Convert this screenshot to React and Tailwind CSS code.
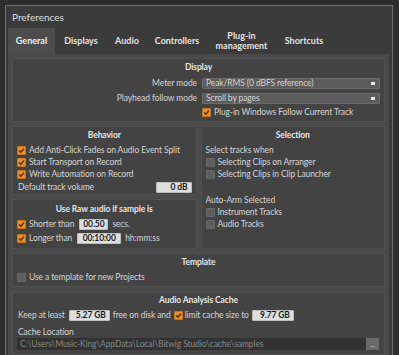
import React from 'react';

// Case à cocher façon Bitwig
const Check = ({ on }) => (
    <span
        className={`w-[9px] h-[9px] shrink-0 rounded-[1px] border flex items-center justify-center ${
            on ? 'bg-[#e8902a] border-[#c87418]' : 'bg-[#5e5e5e] border-[#686868]'
        }`}
    >
        {on && (
            <svg width="7" height="7" viewBox="0 0 7 7">
                <path d="M1.2 3.6 L2.9 5.2 L5.9 1.6" fill="none" stroke="#4a2800" strokeWidth="1.4" />
            </svg>
        )}
    </span>
);

const CheckRow = ({ on, label, className = '' }) => (
    <div className={`h-[12px] flex items-center gap-[3px] ${className}`}>
        <Check on={on} />
        <span>{label}</span>
    </div>
);

const Field = ({ value, className = '' }) => (
    <span
        className={`h-[11px] shrink-0 flex items-center bg-[#dedede] border border-[#bdbdbd] text-[#1c1c1c] font-bold rounded-[1px] px-[3px] ${className}`}
    >
        {value}
    </span>
);

const Select = ({ value }) => (
    <div className="h-[11px] flex-1 flex items-center justify-between bg-[#5c5c5c] border border-[#6b6b6b] rounded-[1px] pl-[3px] pr-[4px]">
        <span>{value}</span>
        <span className="w-[4px] h-[3px] bg-[#e6e6e6]"></span>
    </div>
);

const Section = ({ title, className = '', children }) => (
    <div className={`shrink-0 bg-[#434343] border border-[#505050] ${className}`}>
        <div className="h-[14px] flex items-center justify-center font-bold text-[#e4e4e4]">{title}</div>
        {children}
    </div>
);

const tabs = [
    { label: 'General', w: 'w-[47px]', active: true },
    { label: 'Displays', w: 'w-[52px]' },
    { label: 'Audio', w: 'w-[40px]' },
    { label: 'Controllers', w: 'w-[60px]' },
    { label: 'Plug-in management', w: 'w-[69px]', twoLines: true },
    { label: 'Shortcuts', w: 'w-[56px]' },
];

export default function App() {
    return (
        <div className="w-[399px] h-[355px] overflow-hidden bg-[#2d2d2d] pl-[5px] pt-[5px] font-[family-name:Lato,sans-serif] text-[8.5px] tracking-[-0.1px] leading-none text-[#d4d4d4] whitespace-nowrap">
            <div className="w-[388px] min-h-[350px] bg-[#3b3b3b] border-l border-t border-r border-[#6e6e6e] flex flex-col">
                {/* Titre */}
                <div className="h-[22px] shrink-0 flex items-center pl-[6px] text-[10px] tracking-normal text-[#dcdcdc]">Preferences</div>

                {/* Onglets */}
                <div className="h-[26px] shrink-0 flex ml-[2px] text-[9px] tracking-normal">
                    {tabs.map((t) => (
                        <div
                            key={t.label}
                            className={`${t.w} flex items-center justify-center text-center font-bold leading-[10px] ${
                                t.active ? 'bg-[#4c4c4c] text-[#f0f0f0]' : 'text-[#e2e2e2]'
                            }`}
                        >
                            {t.twoLines ? (
                                <span>
                                    Plug-in
                                    <br />
                                    management
                                </span>
                            ) : (
                                t.label
                            )}
                        </div>
                    ))}
                </div>

                {/* Contenu */}
                <div className="shrink-0 ml-[2px] mr-[3px] bg-[#4a4a4a] p-[4px] flex flex-col gap-[4px]">
                    <Section title="Display" className="pt-[1px] pb-[2px]">
                        <div className="grid grid-cols-[184px_1fr] gap-x-[5px] pr-[4px] mt-[2px]">
                            <div className="h-[14px] flex items-center justify-end">Meter mode</div>
                            <div className="h-[14px] flex items-center">
                                <Select value="Peak/RMS (0 dBFS reference)" />
                            </div>
                            <div className="h-[14px] mt-[1px] flex items-center justify-end">Playhead follow mode</div>
                            <div className="h-[14px] mt-[1px] flex items-center">
                                <Select value="Scroll by pages" />
                            </div>
                            <div></div>
                            <div className="h-[14px] flex items-center gap-[3px]">
                                <Check on />
                                <span>Plug-in Windows Follow Current Track</span>
                            </div>
                        </div>
                    </Section>

                    <div className="shrink-0 grid grid-cols-2 gap-[4px]">
                        <div className="flex flex-col gap-[4px]">
                            <Section title="Behavior" className="pt-[1px] pb-[1px] px-[4px]">
                                <div className="mt-[2px]">
                                    <CheckRow on label="Add Anti-Click Fades on Audio Event Split" />
                                    <CheckRow on label="Start Transport on Record" />
                                    <CheckRow on label="Write Automation on Record" />
                                    <div className="h-[12px] mt-[1px] flex items-center justify-between">
                                        <span className="pl-[1px]">Default track volume</span>
                                        <Field value="0 dB" className="w-[36px] justify-end" />
                                    </div>
                                </div>
                            </Section>
                            <Section title="Use Raw audio if sample is" className="pt-[2px] pb-[4px] px-[4px]">
                                <div className="mt-[2px] h-[12px] flex items-center gap-[3px]">
                                    <Check on />
                                    <span>Shorter than</span>
                                    <Field value="00.50" className="ml-[2px] w-[29px] justify-center" />
                                    <span className="ml-[1px]">secs.</span>
                                </div>
                                <div className="mt-[2px] h-[12px] flex items-center gap-[3px]">
                                    <Check on />
                                    <span>Longer than</span>
                                    <Field value="00:10:00" className="ml-[2px] w-[44px] justify-center" />
                                    <span className="ml-[1px]">hh:mm:ss</span>
                                </div>
                            </Section>
                        </div>

                        <Section title="Selection" className="pt-[1px] px-[4px]">
                            <div className="mt-[2px] h-[12px] flex items-center">Select tracks when</div>
                            <CheckRow on={false} label="Selecting Clips on Arranger" />
                            <CheckRow on={false} label="Selecting Clips in Clip Launcher" />
                            <div className="mt-[14px] h-[12px] flex items-center">Auto-Arm Selected</div>
                            <CheckRow on={false} label="Instrument Tracks" />
                            <CheckRow on={false} label="Audio Tracks" />
                        </Section>
                    </div>

                    <Section title="Template" className="pt-[1px] pb-[3px] px-[4px]">
                        <CheckRow on={false} label="Use a template for new Projects" className="mt-[2px]" />
                    </Section>

                    <Section title="Audio Analysis Cache" className="mt-[1px] pt-[0px] px-[4px] pb-[4px]">
                        <div className="mt-[2px] h-[12px] flex items-center">
                            <span className="pl-[1px]">Keep at least</span>
                            <Field value="5.27 GB" className="ml-[4px] w-[41px] justify-end" />
                            <span className="ml-[3px]">free on disk and</span>
                            <span className="ml-[3px]">
                                <Check on />
                            </span>
                            <span className="ml-[2px]">limit cache size to</span>
                            <Field value="9.77 GB" className="ml-[3px] w-[42px] justify-end" />
                        </div>
                        <div className="mt-[5px] h-[12px] flex items-center pl-[1px]">Cache Location</div>
                        <div className="h-[12px] flex pr-[1px]">
                            <div className="flex-1 bg-[#323232] text-[#858585] flex items-center pl-[3px] overflow-hidden">
                                C:\Users\Music-King\AppData\Local\Bitwig Studio\cache\samples
                            </div>
                            <div className="w-[13px] bg-[#6a6a6a] text-[#dcdcdc] flex items-end justify-center pb-[2px] text-[7px]">...</div>
                        </div>
                    </Section>
                </div>
            </div>
        </div>
    );
}
